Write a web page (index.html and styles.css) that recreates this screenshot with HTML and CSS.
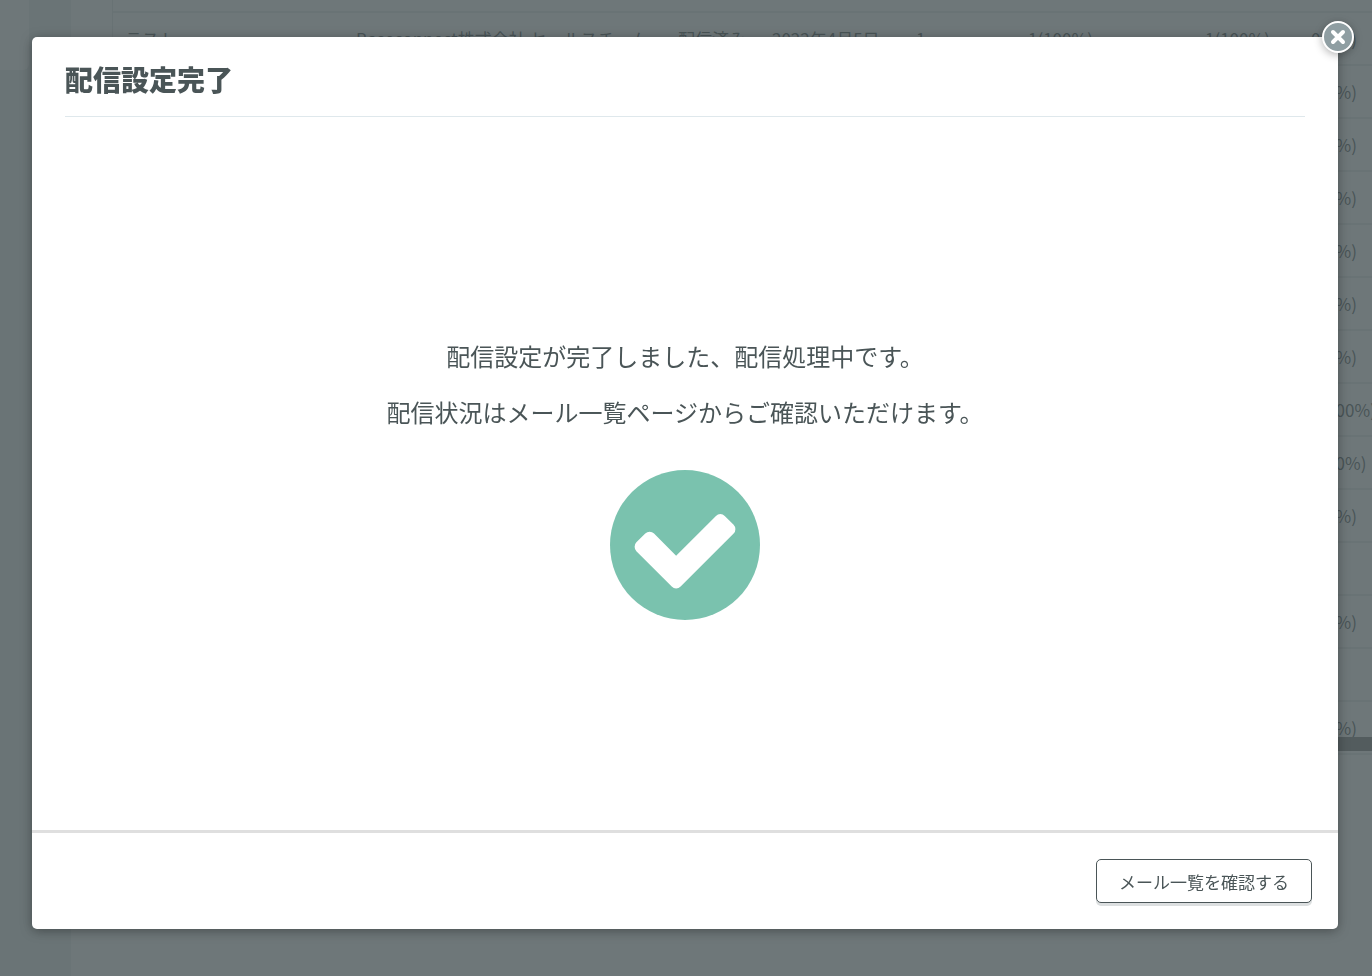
FILE: index.html
```
<!DOCTYPE html>
<html lang="ja">

<head>
	<meta charset="UTF-8">
	<meta name="viewport" content="width=device-width, initial-scale=1.0">
	<title>配信設定完了</title>
	<link rel="stylesheet" href="styles.css">
</head>

<body>
	<!-- Mail list behind the modal -->
	<div class="page" aria-hidden="true">
		<div class="sidebar">
			<div class="sidebar-tab"></div>
		</div>
		<div class="content">
			<div class="table-panel">
				<table class="mail-table">
					<colgroup>
						<col class="col-title">
						<col class="col-team">
						<col class="col-status">
						<col class="col-date">
						<col class="col-count">
						<col class="col-rate">
						<col class="col-open">
						<col class="col-click">
					</colgroup>
					<tbody>
						<tr><td>テスト</td><td>Baseconnect株式会社 セールスチーム</td><td>配信済み</td><td>2022年4月5日</td><td>1</td><td>1(100%)</td><td>1(100%)</td><td>0(0%)</td></tr>
						<tr><td colspan="7"></td><td>0(0%)</td></tr>
						<tr><td colspan="7"></td><td>0(0%)</td></tr>
						<tr><td colspan="7"></td><td>0(0%)</td></tr>
						<tr><td colspan="7"></td><td>0(0%)</td></tr>
						<tr><td colspan="7"></td><td>0(0%)</td></tr>
						<tr><td colspan="7"></td><td>0(0%)</td></tr>
						<tr><td colspan="7"></td><td>1(100%)</td></tr>
						<tr><td colspan="7"></td><td>1(10%)</td></tr>
						<tr><td colspan="7"></td><td>0(0%)</td></tr>
						<tr><td colspan="7"></td><td></td></tr>
						<tr><td colspan="7"></td><td>0(0%)</td></tr>
						<tr><td colspan="7"></td><td></td></tr>
						<tr><td colspan="7"></td><td>0(0%)</td></tr>
					</tbody>
				</table>
				<div class="scrollbar"></div>
			</div>
		</div>
	</div>

	<div class="overlay">
		<div class="modal" role="dialog" aria-modal="true" aria-labelledby="modal-title">
			<button type="button" class="close-btn" aria-label="閉じる">
				<svg viewBox="0 0 16 16" width="16" height="16">
					<path d="M3 3L13 13M13 3L3 13" />
				</svg>
			</button>
			<header class="modal-header">
				<h1 id="modal-title">配信設定完了</h1>
			</header>
			<main class="modal-body">
				<p>配信設定が完了しました、配信処理中です。</p>
				<p>配信状況はメール一覧ページからご確認いただけます。</p>
				<svg class="check-icon" viewBox="0 0 1536 1536">
					<circle cx="768" cy="768" r="768" />
					<path d="M1284 606q0-28-18-46l-91-90q-19-19-45-19t-45 19l-408 407-226-226q-19-19-45-19t-45 19l-91 90q-18 18-18 46 0 27 18 45l362 362q19 19 45 19 27 0 46-19l543-543q18-18 18-45z" />
				</svg>
			</main>
			<footer class="modal-footer">
				<button type="button" class="list-btn">メール一覧を確認する</button>
			</footer>
		</div>
	</div>
</body>

</html>
```

FILE: styles.css
```
* {
	margin: 0;
	padding: 0;
	box-sizing: border-box;
}

body {
	font-family: "Noto Sans CJK JP", sans-serif;
	color: #4a5557;
	background-color: white;
	overflow: hidden;
}

.page {
	display: flex;
	min-height: 100vh;
}

.sidebar {
	width: 71px;
	flex-shrink: 0;
	background-color: #e8eeee;
}

.sidebar-tab {
	width: 29px;
	height: 70px;
	background-color: white;
	border-bottom-right-radius: 6px;
}

.content {
	flex: 1;
	min-width: 0;
	padding-left: 41px;
}

.table-panel {
	position: relative;
	overflow: hidden;
	padding-top: 11px;
	border-left: 1px solid #e0e5e5;
	border-bottom: 2px solid #e6eaea;
}

.mail-table {
	width: 1300px;
	table-layout: fixed;
	border-collapse: separate;
	border-spacing: 0;
	font-size: 17px;
	line-height: 24px;
}

.mail-table td {
	height: 53px;
	padding-left: 12px;
	border-top: 2px solid #e6eaea;
	white-space: nowrap;
}

.col-title {
	width: 231px;
}

.col-team {
	width: 322px;
}

.col-status {
	width: 94px;
}

.col-date {
	width: 144px;
}

.col-count {
	width: 112px;
}

.col-rate {
	width: 177px;
}

.col-open {
	width: 106px;
}

.scrollbar {
	position: absolute;
	left: 0;
	right: 0;
	bottom: 2px;
	height: 14px;
	background-color: #7a7a7a;
}

/* Modal */
.overlay {
	position: fixed;
	top: 0;
	right: 0;
	bottom: 0;
	left: 0;
	display: flex;
	padding: 37px 34px 47px 32px;
	background-color: rgba(74, 85, 87, 0.8);
}

.modal {
	position: relative;
	flex: 1;
	display: flex;
	flex-direction: column;
	background-color: white;
	border-radius: 5px;
	box-shadow: 0 2px 12px rgba(0, 0, 0, 0.35);
}

.close-btn {
	position: absolute;
	top: -16px;
	right: -16px;
	width: 32px;
	height: 32px;
	display: flex;
	align-items: center;
	justify-content: center;
	background-color: #8f9ea2;
	border: 2px solid white;
	border-radius: 50%;
	box-shadow: 0 2px 8px rgba(0, 0, 0, 0.3);
	cursor: pointer;
}

.close-btn path {
	fill: none;
	stroke: white;
	stroke-width: 4;
	stroke-linecap: round;
}

.modal-header {
	margin: 0 33px;
	padding: 22px 0 17px;
	border-bottom: 1px solid #dfe8ec;
}

.modal-header h1 {
	font-size: 28px;
	line-height: 40px;
	font-weight: 900;
}

.modal-body {
	flex: 1;
	display: flex;
	flex-direction: column;
	align-items: center;
	justify-content: center;
	gap: 20px;
	padding-top: 10px;
	font-size: 24px;
	line-height: 36px;
}

.check-icon {
	width: 150px;
	height: 150px;
	margin-top: 20px;
}

.check-icon circle {
	fill: #7ac2ae;
}

.check-icon path {
	fill: white;
}

.modal-footer {
	display: flex;
	justify-content: flex-end;
	padding: 26px;
	border-top: 3px solid #dfdfdf;
}

.list-btn {
	height: 44px;
	padding: 0 22px;
	font-family: inherit;
	font-size: 17px;
	color: #4a5557;
	background-color: white;
	border: 1px solid #4a5557;
	border-radius: 5px;
	box-shadow: 0 3px 0 #dcdfe0;
	cursor: pointer;
}

.list-btn:hover {
	background-color: #f4f6f6;
}
```
